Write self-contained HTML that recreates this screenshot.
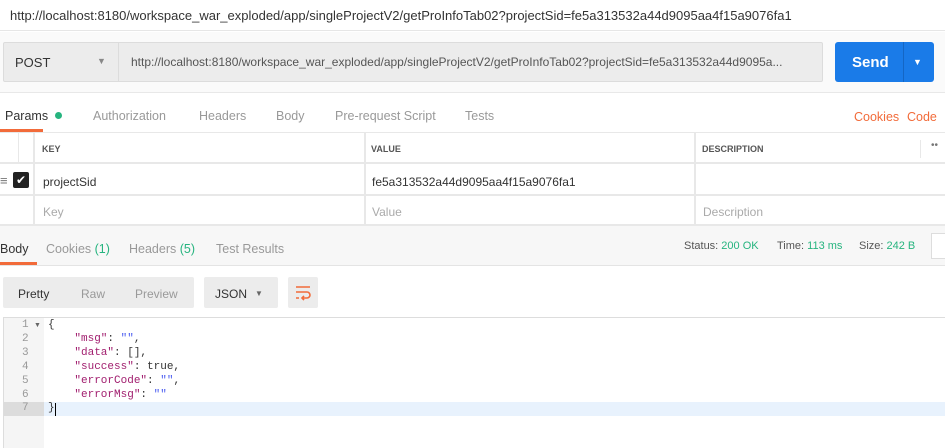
<!DOCTYPE html>
<html><head><style>
*{box-sizing:border-box;margin:0;padding:0}
body{width:945px;height:448px;overflow:hidden;background:#fff;font-family:"Liberation Sans",sans-serif;font-size:12px;color:#505050;position:relative}
.a{position:absolute;white-space:nowrap}
.mono{font-family:"Liberation Mono",monospace;font-size:11px}
</style></head><body>
<div class="a" style="left:0;top:0;width:945px;height:31px;border-bottom:1px solid #e6e6e6"></div>
<div class="a" style="left:10px;top:8px;font-size:13px;color:#333">http://localhost:8180/workspace_war_exploded/app/singleProjectV2/getProInfoTab02?projectSid=fe5a313532a44d9095aa4f15a9076fa1</div>
<div class="a" style="left:0;top:32px;width:945px;height:61px;background:#fafafa;border-bottom:1px solid #e8e8e8"></div>
<div class="a" style="left:3px;top:42px;width:820px;height:40px;background:#ececec;border:1px solid #dcdcdc;border-radius:2px"></div>
<div class="a" style="left:118px;top:42px;width:1px;height:40px;background:#dcdcdc"></div>
<div class="a" style="left:15px;top:55px;font-size:13px;color:#333">POST</div>
<div class="a" style="left:97px;top:56px;font-size:9px;color:#888">▼</div>
<div class="a" style="left:131px;top:55px;color:#555">http://localhost:8180/workspace_war_exploded/app/singleProjectV2/getProInfoTab02?projectSid=fe5a313532a44d9095a...</div>
<div class="a" style="left:835px;top:42px;width:99px;height:40px;background:#1a7be8;border-radius:3px"></div>
<div class="a" style="left:903px;top:42px;width:1px;height:40px;background:#1466c4"></div>
<div class="a" style="left:852px;top:54px;font-size:15px;font-weight:bold;color:#fff">Send</div>
<div class="a" style="left:913px;top:57px;font-size:9px;color:#fff">▼</div>
<div class="a" style="left:0;top:94px;width:945px;height:39px;border-bottom:1px solid #e8e8e8"></div>
<div class="a" style="left:5px;top:109px;color:#333;font-size:12.5px">Params</div>
<div class="a" style="left:55px;top:112px;width:7px;height:7px;border-radius:50%;background:#26b47f"></div>
<div class="a" style="left:93px;top:109px;color:#999;font-size:12.5px">Authorization</div>
<div class="a" style="left:199px;top:109px;color:#999;font-size:12.5px">Headers</div>
<div class="a" style="left:276px;top:109px;color:#999;font-size:12.5px">Body</div>
<div class="a" style="left:335px;top:109px;color:#999;font-size:12.5px">Pre-request Script</div>
<div class="a" style="left:465px;top:109px;color:#999;font-size:12.5px">Tests</div>
<div class="a" style="left:854px;top:110px;color:#f26b3a;font-size:12.5px">Cookies</div>
<div class="a" style="left:907px;top:110px;color:#f26b3a;font-size:12.5px">Code</div>
<div class="a" style="left:0;top:129px;width:43px;height:3px;background:#f26b3a"></div>
<div class="a" style="left:0;top:162px;width:945px;height:2px;background:#e8e8e8"></div>
<div class="a" style="left:0;top:194px;width:945px;height:2px;background:#e8e8e8"></div>
<div class="a" style="left:0;top:224px;width:945px;height:2px;background:#e8e8e8"></div>
<div class="a" style="left:33px;top:133px;width:2px;height:92px;background:#e8e8e8"></div>
<div class="a" style="left:18px;top:133px;width:1px;height:30px;background:#e8e8e8"></div>
<div class="a" style="left:364px;top:133px;width:2px;height:92px;background:#e8e8e8"></div>
<div class="a" style="left:694px;top:133px;width:2px;height:92px;background:#e8e8e8"></div>
<div class="a" style="left:920px;top:140px;width:1px;height:18px;background:#e8e8e8"></div>
<div class="a" style="left:42px;top:144px;font-size:9px;font-weight:bold;color:#555">KEY</div>
<div class="a" style="left:371px;top:144px;font-size:9px;font-weight:bold;color:#555">VALUE</div>
<div class="a" style="left:702px;top:144px;font-size:9px;font-weight:bold;color:#555">DESCRIPTION</div>
<div class="a" style="left:931px;top:140px;font-size:10px;color:#777">••</div>
<div class="a" style="left:0;top:173px;font-size:13px;color:#777">≡</div>
<div class="a" style="left:13px;top:172px;width:16px;height:16px;background:#222;border-radius:2px;color:#fff;font-size:12px;text-align:center;line-height:16px">✔</div>
<div class="a" style="left:43px;top:175px;color:#333">projectSid</div>
<div class="a" style="left:372px;top:175px;color:#333">fe5a313532a44d9095aa4f15a9076fa1</div>
<div class="a" style="left:43px;top:205px;color:#aaa">Key</div>
<div class="a" style="left:372px;top:205px;color:#aaa">Value</div>
<div class="a" style="left:703px;top:205px;color:#aaa">Description</div>
<div class="a" style="left:0;top:226px;width:945px;height:40px;background:#f7f7f7;border-bottom:1px solid #e4e4e4"></div>
<div class="a" style="left:0;top:242px;color:#333;font-size:12.5px">Body</div>
<div class="a" style="left:46px;top:242px;color:#999;font-size:12.5px">Cookies <span style="color:#26b47f">(1)</span></div>
<div class="a" style="left:129px;top:242px;color:#999;font-size:12.5px">Headers <span style="color:#26b47f">(5)</span></div>
<div class="a" style="left:216px;top:242px;color:#999;font-size:12.5px">Test Results</div>
<div class="a" style="left:0;top:262px;width:37px;height:3px;background:#f26b3a"></div>
<div class="a" style="left:684px;top:240px;font-size:11px;color:#555">Status: <span style="color:#26b47f">200 OK</span></div>
<div class="a" style="left:777px;top:240px;font-size:11px;color:#555">Time: <span style="color:#26b47f">113 ms</span></div>
<div class="a" style="left:859px;top:240px;font-size:11px;color:#555">Size: <span style="color:#26b47f">242 B</span></div>
<div class="a" style="left:931px;top:233px;width:14px;height:26px;border:1px solid #ddd;border-right:none;background:#fff"></div>
<div class="a" style="left:3px;top:277px;width:191px;height:31px;background:#ececec;border-radius:2px"></div>
<div class="a" style="left:18px;top:287px;color:#333">Pretty</div>
<div class="a" style="left:81px;top:287px;color:#999">Raw</div>
<div class="a" style="left:135px;top:287px;color:#999">Preview</div>
<div class="a" style="left:204px;top:277px;width:74px;height:31px;background:#ececec;border-radius:2px"></div>
<div class="a" style="left:215px;top:287px;color:#333">JSON</div>
<div class="a" style="left:255px;top:289px;font-size:8px;color:#666">▼</div>
<div class="a" style="left:288px;top:277px;width:30px;height:31px;background:#ececec;border-radius:2px"></div>
<svg class="a" style="left:294px;top:284px" width="18" height="18" viewBox="0 0 18 18"><g fill="none" stroke="#f26b3a" stroke-width="1.6"><path d="M2 3h14M2 8h11a3 3 0 0 1 0 6h-5M2 14h3"/><path d="M10 12l-2 2 2 2"/></g></svg>
<div class="a" style="left:3px;top:317px;width:942px;height:131px;border-top:1px solid #ddd;border-left:1px solid #ddd"></div>
<div class="a" style="left:4px;top:318px;width:40px;height:130px;background:#f5f5f5"></div>
<div class="a" style="left:4px;top:402px;width:40px;height:14px;background:#dcdcdc"></div>
<div class="a" style="left:44px;top:402px;width:901px;height:14px;background:#e8f2fd"></div>
<div class="a mono" style="left:22px;top:319px;line-height:13.9px;color:#999;text-align:right">1<br>2<br>3<br>4<br>5<br>6<br>7</div>
<div class="a" style="left:34px;top:322px;font-size:7px;color:#666">▼</div>
<div class="a mono" style="left:48px;top:319px;line-height:13.9px;color:#333;white-space:pre">{
    <span style="color:#a11d6e">"msg"</span>: <span style="color:#4a5cf0">""</span>,
    <span style="color:#a11d6e">"data"</span>: [],
    <span style="color:#a11d6e">"success"</span>: true,
    <span style="color:#a11d6e">"errorCode"</span>: <span style="color:#4a5cf0">""</span>,
    <span style="color:#a11d6e">"errorMsg"</span>: <span style="color:#4a5cf0">""</span>
}</div>
<div class="a" style="left:55px;top:403px;width:1px;height:13px;background:#000"></div>
</body></html>
